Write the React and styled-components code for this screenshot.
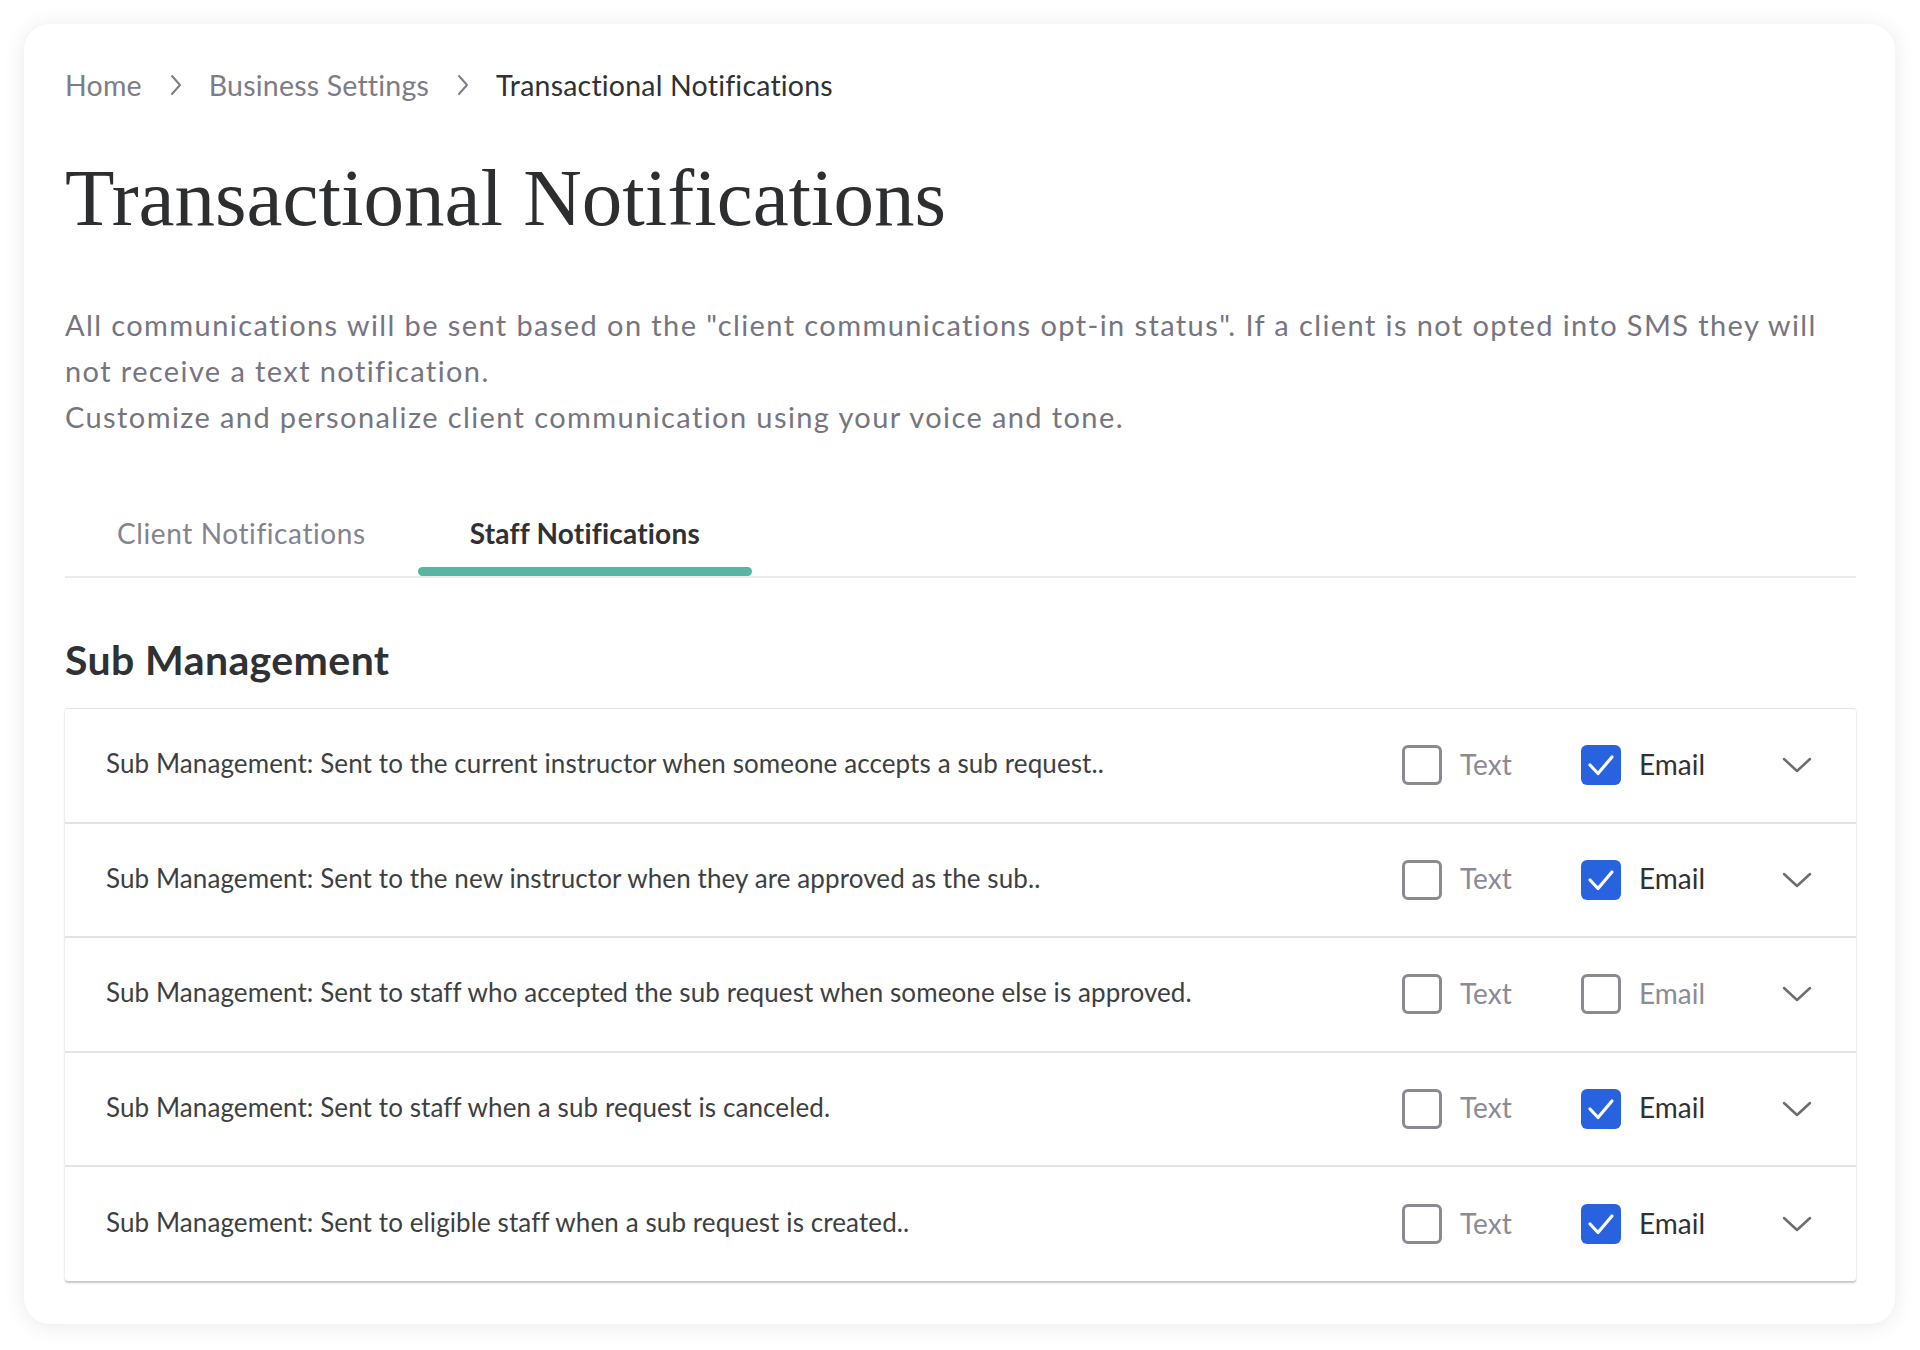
import styled, {createGlobalStyle} from "styled-components";

const rows = [
    {text: "Sub Management: Sent to the current instructor when someone accepts a sub request..", sms: false, email: true},
    {text: "Sub Management: Sent to the new instructor when they are approved as the sub..", sms: false, email: true},
    {text: "Sub Management: Sent to staff who accepted the sub request when someone else is approved.", sms: false, email: false},
    {text: "Sub Management: Sent to staff when a sub request is canceled.", sms: false, email: true},
    {text: "Sub Management: Sent to eligible staff when a sub request is created..", sms: false, email: true},
];

const Chevron = () => (
    <svg width="30" height="16" viewBox="0 0 30 16" fill="none">
        <polyline points="2,2 15,14 28,2" stroke="#6d6d6f" strokeWidth="2.5" strokeLinecap="round" strokeLinejoin="round"/>
    </svg>
);

const CrumbArrow = () => (
    <Sep width="12" height="22" viewBox="0 0 12 22" fill="none">
        <polyline points="2,2 10,11 2,20" stroke="#7d7c87" strokeWidth="2" strokeLinecap="round" strokeLinejoin="round"/>
    </Sep>
);

const Check = ({checked, label}) => (
    <Option>
        <Box $checked={checked}>
            {checked && (
                <svg width="40" height="40" viewBox="0 0 40 40" fill="none">
                    <polyline points="9,20 17,28.5 31,12" stroke="#fff" strokeWidth="3.2" strokeLinecap="round" strokeLinejoin="round"/>
                </svg>
            )}
        </Box>
        <OptionLabel $checked={checked}>{label}</OptionLabel>
    </Option>
);

const App = () => {
    return (
        <Page>
            <GlobalStyle/>
            <Card>
                <Breadcrumb>
                    <Crumb>Home</Crumb>
                    <CrumbArrow/>
                    <Crumb>Business Settings</Crumb>
                    <CrumbArrow/>
                    <Crumb $current>Transactional Notifications</Crumb>
                </Breadcrumb>

                <Title>Transactional Notifications</Title>

                <Description>
                    <p>All communications will be sent based on the "client communications opt-in status". If a client is not opted into SMS they will not receive a text notification.</p>
                    <p>Customize and personalize client communication using your voice and tone.</p>
                </Description>

                <Tabs>
                    <Tab>
                        <TabLabel>Client Notifications</TabLabel>
                        <Indicator/>
                    </Tab>
                    <Tab>
                        <TabLabel $active>Staff Notifications</TabLabel>
                        <Indicator $active/>
                    </Tab>
                </Tabs>

                <SectionTitle>Sub Management</SectionTitle>

                <List>
                    {rows.map((row) => (
                        <Row key={row.text}>
                            <RowText>{row.text}</RowText>
                            <Check checked={row.sms} label="Text"/>
                            <Check checked={row.email} label="Email"/>
                            <Chevron/>
                        </Row>
                    ))}
                </List>
            </Card>
        </Page>
    )
}

const GlobalStyle = createGlobalStyle`
    body {
        margin: 0;
        background: #ffffff;
        font-family: Lato, "Noto Sans", sans-serif;
    }
    p {
        margin: 0;
    }
`;

const Page = styled.div`
    height: 1350px;
    padding: 24px 25px 0 24px;
    box-sizing: border-box;
`;

const Card = styled.div`
    height: 1300px;
    box-sizing: border-box;
    padding: 45px 39px 0 41px;
    background: #fff;
    border-radius: 26px;
    box-shadow: 0 2px 22px rgba(0, 0, 0, 0.09);
    overflow: hidden;
`;

const Breadcrumb = styled.nav`
    display: flex;
    align-items: center;
    height: 32px;
    font-size: 28.5px;
    letter-spacing: 0.2px;
`;

const Crumb = styled.span`
    color: ${(p) => (p.$current ? "#2f3133" : "#7d7c87")};
`;

const Sep = styled.svg`
    margin: 0 27px 0 28px;
    flex-shrink: 0;
`;

const Title = styled.h1`
    margin: 56px 0 0;
    font-family: "Liberation Serif", "DejaVu Serif", serif;
    font-weight: 400;
    font-size: 81px;
    line-height: 82px;
    color: #2c2e30;
`;

const Description = styled.div`
    max-width: 1765px;
    margin-top: 63px;
    font-size: 29px;
    letter-spacing: 1.4px;
    line-height: 46px;
    color: #76757f;
`;

const Tabs = styled.div`
    display: flex;
    margin-top: 77px;
    border-bottom: 2px solid #ececf0;
`;

const Tab = styled.div`
    display: flex;
    flex-direction: column;
    align-items: stretch;
`;

const TabLabel = styled.span`
    padding: 0 52px;
    font-size: 28px;
    letter-spacing: ${(p) => (p.$active ? "0.2px" : "0.6px")};
    line-height: 32px;
    font-weight: ${(p) => (p.$active ? 700 : 400)};
    color: ${(p) => (p.$active ? "#2f3133" : "#84838e")};
`;

const Indicator = styled.div`
    height: 9px;
    margin-top: 18px;
    border-radius: 5px;
    background: ${(p) => (p.$active ? "#58b5a2" : "transparent")};
`;

const SectionTitle = styled.h2`
    margin: 58px 0 0;
    font-size: 41px;
    letter-spacing: 0.4px;
    line-height: 48px;
    font-weight: 700;
    color: #2f3133;
`;

const List = styled.div`
    margin-top: 24px;
    border-top: 1px solid #e4e4e4;
    border-radius: 3px;
    box-shadow: 0 2px 2px rgba(0, 0, 0, 0.22), 0 0 1px rgba(0, 0, 0, 0.12);
`;

const Row = styled.div`
    display: grid;
    grid-template-columns: 1fr 179px 201px 30px;
    align-items: center;
    height: 112.5px;
    box-sizing: content-box;
    padding: 0 44px 0 41px;
    border-bottom: 2px solid #e3e3e3;

    &:last-child {
        border-bottom: none;
        height: 114px;
    }
`;

const RowText = styled.span`
    padding-bottom: 4px;
    font-size: 26px;
    letter-spacing: 0.1px;
    color: #3d3f41;
`;

const Option = styled.label`
    display: flex;
    align-items: center;
    gap: 18px;
`;

const Box = styled.span`
    width: 40px;
    height: 40px;
    box-sizing: border-box;
    border-radius: 6px;
    border: ${(p) => (p.$checked ? "none" : "3px solid #8b8a93")};
    background: ${(p) => (p.$checked ? "#2962de" : "#fff")};
    display: flex;
`;

const OptionLabel = styled.span`
    padding-bottom: 3px;
    font-size: 28px;
    color: ${(p) => (p.$checked ? "#2f3133" : "#8b8a95")};
`;

export default App;
